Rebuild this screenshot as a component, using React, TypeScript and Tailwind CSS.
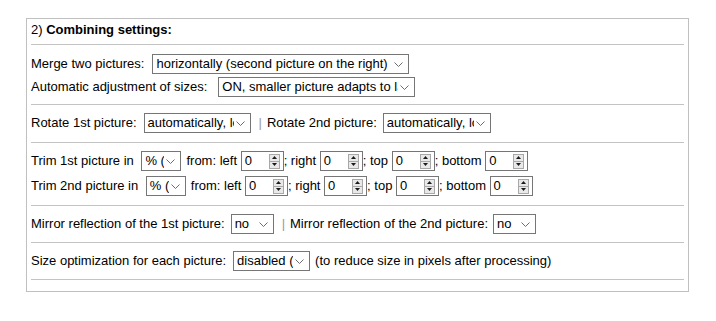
import React from "react";

function Chevron() {
  return (
    <svg width="9" height="5" viewBox="0 0 9 5" className="shrink-0">
      <path d="M0.5 0.5 L4.5 4.5 L8.5 0.5" fill="none" stroke="#6d6d6d" strokeWidth="1" />
    </svg>
  );
}

function Sel({ className, text }: { className: string; text: string }) {
  return (
    <div className={`flex h-[20px] shrink-0 items-center border border-[#767676] bg-white ${className}`}>
      <span className="min-w-0 flex-1 overflow-hidden whitespace-nowrap pl-[3px] leading-[18px]">{text}</span>
      <span className="ml-[2px] mr-[5px] flex items-center">
        <Chevron />
      </span>
    </div>
  );
}

function Spin({ className = "" }: { className?: string }) {
  return (
    <div className={`flex h-[20px] w-[43px] shrink-0 items-center border border-[#767676] bg-white ${className}`}>
      <span className="flex-1 pl-[3px] leading-[18px]">0</span>
      <div className="mr-[3px] flex h-[15px] w-[11px] flex-col border border-[#a8a8a8] bg-[#e9e9e9]">
        <div className="flex flex-1 items-center justify-center border-b border-[#a8a8a8]">
          <svg width="5" height="3" viewBox="0 0 5 3">
            <path d="M2.5 0 L5 3 L0 3 Z" fill="#1a1a1a" />
          </svg>
        </div>
        <div className="flex flex-1 items-center justify-center">
          <svg width="5" height="3" viewBox="0 0 5 3">
            <path d="M0 0 L5 0 L2.5 3 Z" fill="#1a1a1a" />
          </svg>
        </div>
      </div>
    </div>
  );
}

function Hr() {
  return <div className="h-px bg-[#c3c3c3]" />;
}

function Bar({ className }: { className: string }) {
  return <span className={`mr-[5px] text-[#9a9a9a] ${className}`}>|</span>;
}

function TrimRow({ label, selClass }: { label: string; selClass: string }) {
  return (
    <div className="flex h-[20px] items-center whitespace-pre">
      <span>{label}</span>
      <Sel className={selClass} text="% (percent)" />
      <span className="ml-[5px]">from: left </span>
      <Spin />
      <span>; right </span>
      <Spin />
      <span>; top </span>
      <Spin />
      <span>; bottom </span>
      <Spin />
    </div>
  );
}

export default function App() {
  return (
    <div className="min-h-[321px] bg-white pl-[26px] pt-[18px] font-['Liberation_Sans',Arial,sans-serif] text-[13px] text-black">
      <div className="w-[663px] border border-[#c0c0c0] px-[4px]">
        <div className="h-[25px] pt-[1px] leading-[20px]">
          2) <b>Combining settings:</b>
        </div>
        <Hr />
        <div className="flex flex-col gap-[3px] pb-[7px] pt-[9px]">
          <div className="flex h-[20px] items-center">
            <span>Merge two pictures:</span>
            <Sel className="ml-[8px] w-[257px]" text="horizontally (second picture on the right)" />
          </div>
          <div className="flex h-[20px] items-center">
            <span>Automatic adjustment of sizes:</span>
            <Sel className="ml-[11px] w-[197px]" text="ON, smaller picture adapts to larger one" />
          </div>
        </div>
        <Hr />
        <div className="pb-[9px] pt-[8px]">
          <div className="flex h-[20px] items-center">
            <span>Rotate 1st picture:</span>
            <Sel className="ml-[7px] w-[107px]" text="automatically, losslessly" />
            <Bar className="ml-[8px]" />
            <span>Rotate 2nd picture:</span>
            <Sel className="ml-[6px] w-[108px]" text="automatically, losslessly" />
          </div>
        </div>
        <Hr />
        <div className="flex flex-col gap-[5px] pb-[9px] pt-[8px]">
          <TrimRow label="Trim 1st picture in " selClass="ml-[4px] w-[40px]" />
          <TrimRow label="Trim 2nd picture in " selClass="ml-[4px] w-[40px]" />
        </div>
        <Hr />
        <div className="pb-[8px] pt-[8px]">
          <div className="flex h-[20px] items-center">
            <span>Mirror reflection of the 1st picture:</span>
            <Sel className="ml-[6px] w-[43px]" text="no" />
            <Bar className="ml-[8px]" />
            <span>Mirror reflection of the 2nd picture:</span>
            <Sel className="ml-[5px] w-[43px]" text="no" />
          </div>
        </div>
        <Hr />
        <div className="pb-[8px] pt-[8px]">
          <div className="flex h-[20px] items-center whitespace-pre">
            <span>Size optimization for each picture:</span>
            <Sel className="ml-[7px] w-[77px]" text="disabled (original size)" />
            <span className="ml-[5px]">(to reduce size in pixels after processing)</span>
          </div>
        </div>
        <Hr />
        <div className="h-[11px]" />
      </div>
    </div>
  );
}
